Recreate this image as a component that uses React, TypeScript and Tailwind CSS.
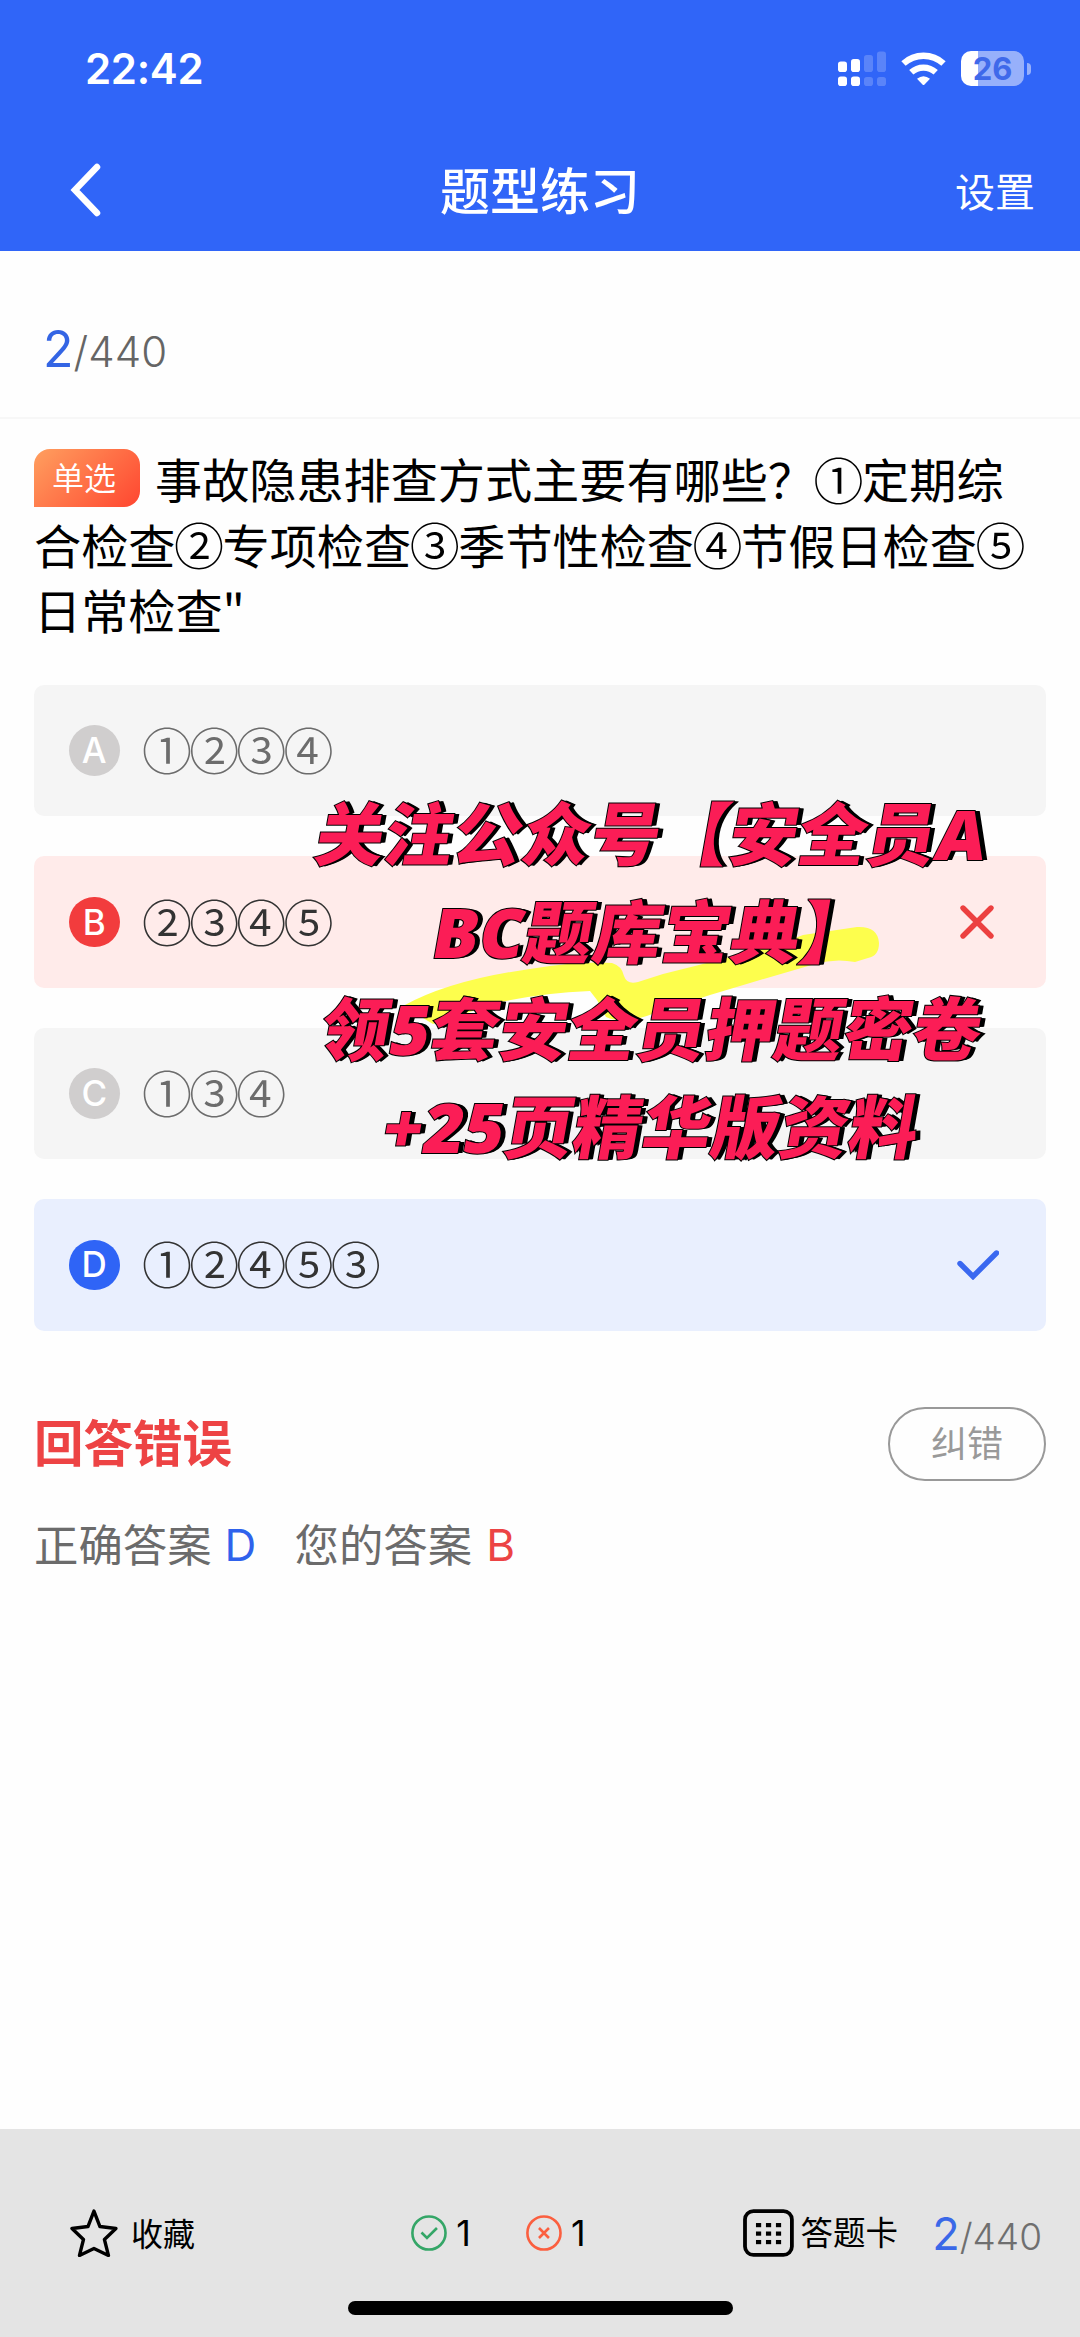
import React from 'react';

type OptionState = 'idle' | 'wrong' | 'correct';

interface Option {
  key: string;
  text: string;
  state: OptionState;
}

const options: Option[] = [
  { key: 'A', text: '①②③④', state: 'idle' },
  { key: 'B', text: '②③④⑤', state: 'wrong' },
  { key: 'C', text: '①③④', state: 'idle' },
  { key: 'D', text: '①②④⑤③', state: 'correct' },
];

const questionLines = [
  '事故隐患排查方式主要有哪些？①定期综',
  '合检查②专项检查③季节性检查④节假日检查⑤',
  '日常检查"',
];

const promoLines = ['关注公众号【安全员A', 'BC题库宝典】', '领5套安全员押题密卷', '+25页精华版资料'];

const rowStyles: Record<OptionState, string> = {
  idle: 'bg-[#f5f5f5] text-[#6c6c6c]',
  wrong: 'bg-[#ffebea] text-[#333333]',
  correct: 'bg-[#e9effe] text-[#333333]',
};

const keyStyles: Record<OptionState, string> = {
  idle: 'bg-[#d0cece]',
  wrong: 'bg-[#f23c3d]',
  correct: 'bg-[#2f64f6]',
};

// Circled digits fill the same 47px cell as a Chinese character
const CircledText: React.FC<{ text: string }> = ({ text }) => (
  <>
    {text.split(/([①-⑨])/).map((part, index) =>
      /[①-⑨]/.test(part) ? (
        <span
          key={index}
          className="inline-flex w-[47.15px] justify-center font-['Noto_Sans_CJK_SC',sans-serif] text-[50px] font-[350] leading-none"
        >
          {part}
        </span>
      ) : (
        part
      )
    )}
  </>
);

const StatusBar: React.FC = () => (
  <div className="flex h-[137px] items-center justify-between pl-[85px] pr-[49px]">
    <span className="font-['Inter',sans-serif] text-[42px] font-semibold leading-none tracking-[-0.3px]">
      22:42
    </span>
    <div className="flex items-center">
      <svg width="48" height="35" viewBox="0 0 48 35" fill="#fff">
        <rect x="0" y="10.5" width="9" height="10.5" rx="2.8" />
        <rect x="13" y="8" width="9" height="13" rx="2.8" />
        <g opacity="0.2">
          <rect x="26" y="4" width="9" height="17" rx="2.8" />
          <rect x="39" y="0.5" width="9" height="20.5" rx="2.8" />
          <rect x="26" y="26" width="9" height="9" rx="2.8" />
          <rect x="39" y="26" width="9" height="9" rx="2.8" />
        </g>
        <rect x="0" y="25.5" width="9" height="9.5" rx="2.8" />
        <rect x="13" y="25.5" width="9" height="9.5" rx="2.8" />
      </svg>
      <svg className="ml-[15px]" width="45" height="34" viewBox="0 0 45 34">
        <path d="M2.5 11.5 A29.5 29.5 0 0 1 42.5 11.5" fill="none" stroke="#fff" strokeWidth="6.4" />
        <path d="M10.3 20.3 A18 18 0 0 1 34.7 20.3" fill="none" stroke="#fff" strokeWidth="6.2" />
        <path d="M16 26.8 Q22.5 21.5 29 26.8 L23.5 32.5 Q22.5 33.5 21.5 32.5 Z" fill="#fff" />
      </svg>
      <div className="ml-[15px] flex h-[35px] w-[63px] items-center justify-center overflow-hidden rounded-[10px] bg-[linear-gradient(90deg,#ffffff_27%,#97b0fb_27%)]">
        <span className="font-['Inter',sans-serif] text-[31px] font-bold leading-none text-[#3f69ea]">26</span>
      </div>
      <div className="ml-[2.5px] h-[12px] w-[4.5px] rounded-r-full bg-[#97b0fb]" />
    </div>
  </div>
);

const TitleBar: React.FC = () => (
  <div className="grid h-[106px] grid-cols-3 items-center pl-[70px] pr-[45px]">
    <svg width="31" height="54" viewBox="0 0 31 54" fill="none" stroke="#fff" strokeWidth="6.5">
      <path d="M27 4 L5 27 L27 50" strokeLinecap="round" strokeLinejoin="miter" />
    </svg>
    <h1 className="ml-[-25px] whitespace-nowrap pb-[5px] text-center text-[50px] font-medium leading-none">
      题型练习
    </h1>
    <span className="text-right text-[40px] leading-none">设置</span>
  </div>
);

const Counter: React.FC<{ small?: boolean }> = ({ small }) => (
  <div className="flex items-baseline font-['Inter',sans-serif] leading-none">
    <span className={small ? 'text-[45px] text-[#3a68e8]' : 'text-[50px] text-[#3465e4]'}>2</span>
    <span
      className={
        small
          ? 'text-[37px] font-light text-[#6f6f6f]'
          : 'text-[42px] font-light tracking-[0.1px] text-[#656565]'
      }
    >
      /440
    </span>
  </div>
);

const OptionRow: React.FC<{ option: Option }> = ({ option }) => (
  <div className={`flex h-[131.4px] items-center rounded-[10px] pl-[35px] pr-[47px] ${rowStyles[option.state]}`}>
    <span
      className={`flex size-[50.5px] items-center justify-center rounded-full font-['Inter',sans-serif] text-[35px] font-medium leading-none text-white ${keyStyles[option.state]}`}
    >
      {option.key}
    </span>
    <span className="ml-[24px] flex flex-1 pb-[5px]">
      <CircledText text={option.text} />
    </span>
    {option.state === 'wrong' && (
      <svg className="mr-[4px]" width="36" height="36" viewBox="0 0 36 36" fill="none" stroke="#ec4040">
        <path d="M4 4 L32 32 M32 4 L4 32" strokeWidth="5.4" strokeLinecap="round" />
      </svg>
    )}
    {option.state === 'correct' && (
      <svg width="42" height="30" viewBox="0 0 42 30" fill="none" stroke="#3a68f0">
        <path d="M3 13.5 L16 26.5 L39.5 3" strokeWidth="5.4" strokeLinecap="round" />
      </svg>
    )}
  </div>
);

const Promo: React.FC = () => (
  <div className="absolute left-[302px] top-[785px] w-[700px]">
    <svg className="absolute left-[98px] top-[135px]" width="490" height="120" viewBox="400 920 490 120">
      <path
        d="M403 1006 Q450 980 530 969 Q580 961 612 963 Q622 966 624 976 Q627 985 638 982 L663 974 L695 966 L780 944 L803 935 L857 927 Q878 926 879 943 Q879 956 868 958 L855 962 Q835 958 815 964 L760 980 L710 995 L655 1013 Q625 1025 606 1017 L597 1000 L590 991 Q540 993 497 1003 L433 1024 Z"
        fill="#fdfe4d"
      />
    </svg>
    <div className="relative flex flex-col items-center">
      {promoLines.map(line => (
        <p
          key={line}
          className="-skew-x-10 whitespace-nowrap font-['Noto_Sans','Noto_Sans_CJK_SC',sans-serif] text-[68.5px] font-black leading-[97.5px] tracking-[0.4px] text-[#fb1d56] [-webkit-text-stroke:2px_#000] [paint-order:stroke_fill] [text-shadow:2px_0_0_#000,4px_0_0_#000,5px_0_0_#000]"
        >
          {line}
        </p>
      ))}
    </div>
  </div>
);

const Footer: React.FC = () => (
  <footer className="flex h-[208px] flex-col items-center bg-[#e4e4e4]">
    <div className="flex h-[172px] w-full items-center pl-[70px] pr-[38px] pt-[36px] text-[32px] leading-none text-black">
      <svg width="48" height="48" viewBox="0 0 48 48" fill="none" stroke="#000" strokeWidth="3.4">
        <path
          d="M24 2 L30 17.5 L46 19.5 L34.5 30.5 L38.5 46.5 L24 39.5 L9.5 46.5 L13.5 30.5 L2 19.5 L18 17.5 Z"
          strokeLinejoin="round"
        />
      </svg>
      <span className="ml-[13px] w-[281px] pb-[3px]">收藏</span>
      <svg width="36" height="36" viewBox="0 0 36 36" fill="none" stroke="#34a667" strokeWidth="2.6">
        <circle cx="18" cy="18" r="16.6" />
        <path d="M10.5 17.5 L16 23 L26 13" />
      </svg>
      <span className="ml-[9px] w-[70px] font-['Inter',sans-serif] text-[36px]">1</span>
      <svg width="36" height="36" viewBox="0 0 36 36" fill="none" stroke="#fb5f3f" strokeWidth="2.6">
        <circle cx="18" cy="18" r="16.6" />
        <path d="M13 13 L23 23 M23 13 L13 23" />
      </svg>
      <span className="ml-[9px] w-[172px] font-['Inter',sans-serif] text-[36px]">1</span>
      <svg width="51" height="48" viewBox="0 0 51 48">
        <rect x="2" y="2" width="47" height="44" rx="8.5" fill="none" stroke="#000" strokeWidth="3.8" />
        {[14, 22.5, 31].map(y =>
          [13, 23, 33].map(x => <rect key={`${x}-${y}`} x={x} y={y} width="5.2" height="4.2" />)
        )}
      </svg>
      <span className="ml-[7px] w-[132px] pb-[3px] text-[32.5px]">答题卡</span>
      <Counter small />
    </div>
    <div className="h-[14px] w-[385px] rounded-full bg-black" />
  </footer>
);

const App: React.FC = () => {
  return (
    <div className="relative flex h-[2337px] w-[1080px] flex-col overflow-hidden bg-[#fefefe] font-['Noto_Sans_CJK_SC',sans-serif]">
      <header className="h-[251px] bg-[#3065f8] text-white">
        <StatusBar />
        <TitleBar />
      </header>

      <div className="flex h-[168px] items-center border-b-2 border-[#f7f7f7] pl-[43px] pt-[29px]">
        <Counter />
      </div>

      <main className="flex flex-1 flex-col px-[34px]">
        <div className="mt-[26px] text-[47.15px] leading-[65.5px] text-black">
          <div className="flex h-[65.5px] items-center whitespace-nowrap">
            <span className="mr-[15px] flex h-[58px] w-[106px] items-center justify-center rounded-t-2xl rounded-br-2xl bg-[linear-gradient(135deg,#ff9f5f,#ff4630)] pb-[3px] pr-[6px] text-[32px] font-[350] leading-none text-white">
              单选
            </span>
            <CircledText text={questionLines[0]} />
          </div>
          {questionLines.slice(1).map(line => (
            <div key={line} className="flex h-[65.5px] items-center whitespace-nowrap">
              <CircledText text={line} />
            </div>
          ))}
        </div>

        <div className="mt-[43.5px] flex flex-col gap-10">
          {options.map(option => (
            <OptionRow key={option.key} option={option} />
          ))}
        </div>

        <div className="mt-[76px] flex h-[74px] items-center justify-between">
          <span className="pb-[5px] text-[49.5px] font-bold leading-none text-[#ed4344]">回答错误</span>
          <button className="h-[74px] w-[158px] rounded-full border-2 border-[#999999] pb-[5px] text-[36px] leading-none text-[#999999]">
            纠错
          </button>
        </div>

        <div className="mt-[39px] flex items-center text-[44.4px] leading-none text-[#6b6b6b]">
          <span>正确答案</span>
          <span className="ml-[13px] w-[70px] pt-[3px] font-['Inter',sans-serif] text-[44px] text-[#2f62ec]">D</span>
          <span>您的答案</span>
          <span className="ml-[14px] pt-[3px] font-['Inter',sans-serif] text-[44px] text-[#ec4344]">B</span>
        </div>
      </main>

      <Footer />
      <Promo />
    </div>
  );
};

export default App;
